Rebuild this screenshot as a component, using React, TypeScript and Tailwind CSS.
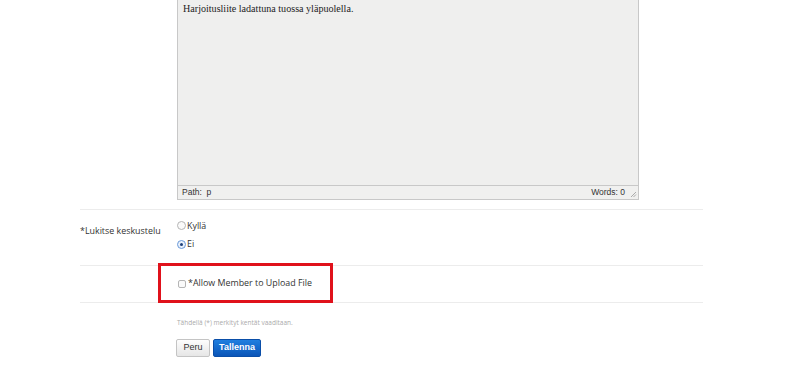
export default function App() {
  return (
    <div className="w-[800px] h-[371px] bg-white overflow-hidden relative" style={{ fontFamily: '"Open Sans", "Liberation Sans", sans-serif' }}>
      <div className="ml-[80px] w-[623px]">
        {/* Editor row */}
        <div className="border-b border-[#ececec] h-[210px] pl-[97px]">
          <div className="w-[462px] border-x border-b border-[#c8c8c8]">
            <div className="h-[185px] bg-[#efefee] px-[5px] pt-[1px] text-[10.1px] text-[#222]" style={{ fontFamily: '"Liberation Serif", serif' }}>
              Harjoitusliite ladattuna tuossa yläpuolella.
            </div>
            <div className="h-[14px] border-t border-[#c8c8c8] bg-[#f0f0ef] flex items-center justify-between px-[4px] text-[8.5px] text-[#333] relative" style={{ fontFamily: '"Liberation Sans", sans-serif' }}>
              <span>Path:&nbsp; p</span>
              <span className="mr-[9px]">Words: 0</span>
              <svg className="absolute right-[1px] bottom-[1px]" width="7" height="7" viewBox="0 0 7 7">
                <path d="M6 1 L1 6 M6 3.5 L3.5 6" stroke="#999" strokeWidth="0.8" />
              </svg>
            </div>
          </div>
        </div>

        {/* Lock discussion row */}
        <div className="border-b border-[#ececec] h-[56px] flex text-[8.9px] text-[#333]">
          <div className="w-[97px] pt-[14px]">*Lukitse keskustelu</div>
          <div className="pt-[9px] flex flex-col gap-[5px]">
            <label className="flex items-center gap-[1px]">
              <span className="w-[9px] h-[9px] rounded-full border border-[#b5b5b5] bg-[#fafafa]" />
              <span>Kyllä</span>
            </label>
            <label className="flex items-center gap-[1px]">
              <span className="w-[9px] h-[9px] rounded-full border border-[#6b9ad8] bg-[#e8f0fb] flex items-center justify-center">
                <span className="w-[3px] h-[3px] rounded-full bg-[#1b3f7a]" />
              </span>
              <span>Ei</span>
            </label>
          </div>
        </div>

        {/* Upload row */}
        <div className="border-b border-[#ececec] h-[37px] flex items-center pl-[98px] text-[8.9px] text-[#333]">
          <label className="flex items-center gap-[2px] -mt-[3px]">
            <span className="w-[8px] h-[8px] rounded-[2px] border border-[#b5b5b5] bg-[#fafafa] mt-[3px]" />
            <span>*Allow Member to Upload File</span>
          </label>
        </div>

        {/* Footer */}
        <div className="pl-[96px] pt-[15px]">
          <p className="text-[6.5px] text-[#aaa] pl-[1px]">Tähdellä (*) merkityt kentät vaaditaan.</p>
          <div className="flex gap-[3px] mt-[11px]" style={{ fontFamily: '"Liberation Sans", sans-serif' }}>
            <button className="h-[18px] w-[34px] text-[9px] text-[#333] bg-gradient-to-b from-[#fdfdfd] to-[#e6e6e6] border border-[#c4c4c4] rounded-[2px]">Peru</button>
            <button className="h-[18px] w-[48px] text-[9px] font-semibold text-white bg-gradient-to-b from-[#1f7fe0] to-[#0b55b8] border border-[#0a4ea8] rounded-[2px]">Tallenna</button>
          </div>
        </div>
      </div>

      {/* Red annotation box */}
      <div className="absolute left-[158px] top-[263px] w-[175px] h-[40px] border-[3px] border-[#e0111b]" />
    </div>
  )
}
